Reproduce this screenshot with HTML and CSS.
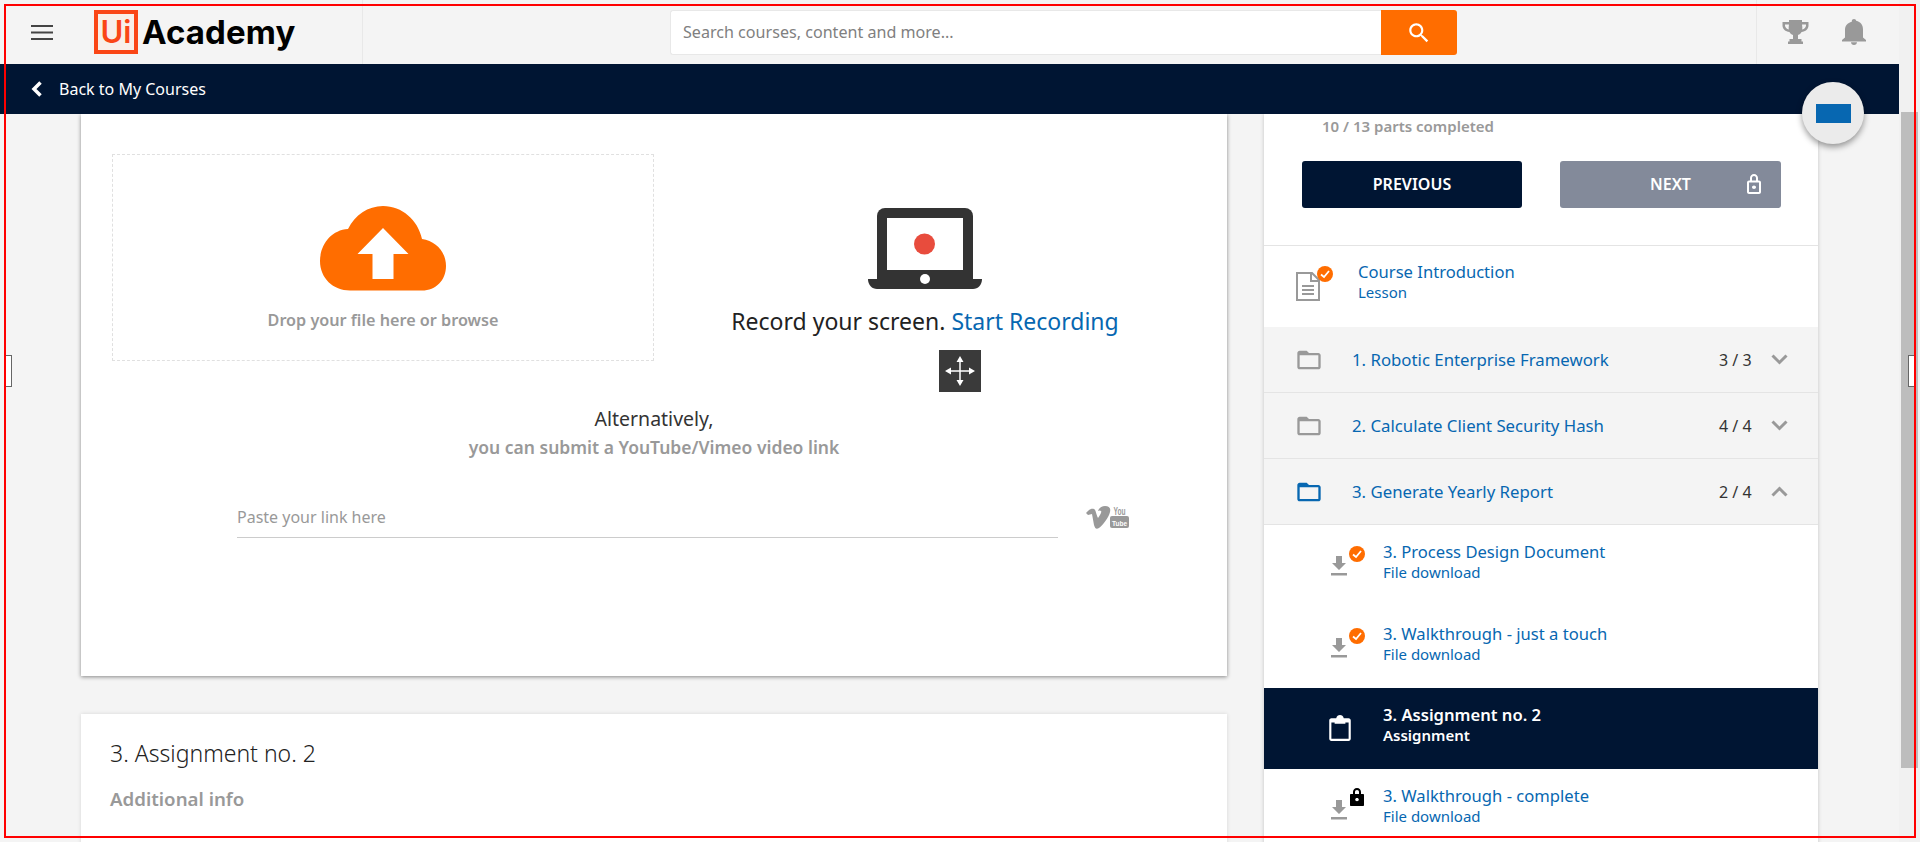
FILE: index.html
```html
<!DOCTYPE html>
<html lang="en">
<head>
  <meta charset="UTF-8">
  <meta name="viewport" content="width=device-width, initial-scale=1.0">
  <title>UiPath Academy</title>
  <link rel="stylesheet" href="styles.css">
</head>
<body>
  <div id="page">
    <div id="app">
      <div id="header">
        <div class="header-left">
          <svg class="burger" width="22" height="15" viewBox="0 0 22 15"><path d="M0 0h22v2H0zM0 6.500h22v2H0zM0 13h22v2H0z" fill="#444"/></svg>
          <div class="logo"><span class="logo-box">Ui</span><span class="logo-text">Academy</span></div>
        </div>
        <div class="search">
          <div class="search-field">Search courses, content and more...</div>
          <div class="search-btn">
            <svg width="26" height="26" viewBox="0 0 24 24"><path d="M15.500 14h-.79l-.28-.27C15.410 12.590 16 11.110 16 9.500 16 5.910 13.090 3 9.500 3S3 5.910 3 9.500 5.910 16 9.500 16c1.610 0 3.090-.59 4.230-1.570l.27.28v.79l5 4.990L20.490 19l-4.990-5zm-6 0C7.010 14 5 11.990 5 9.500S7.010 5 9.500 5 14 7.010 14 9.500 11.990 14 9.500 14z" fill="#fff"/></svg>
          </div>
        </div>
        <div class="header-right">
          <svg width="27" height="24" viewBox="0 0 27 24"><path d="M7 0h13v2h6.500v3.500c0 3.500-3 6-6.900 6.600-.9 1.500-2.100 2.500-3.600 3V19h3.500v2.500H21V24H6v-2.500h1.500V19H11v-3.900c-1.500-.5-2.700-1.500-3.600-3C3.500 11.500.5 9 .5 5.500V2H7zM3 4.500v1c0 1.900 1.600 3.400 3.900 4C6.300 8 6.900 6.200 7 4.500zm21 0h-4c.1 1.700.700 3.500.1 5 2.300-.6 3.900-2.100 3.900-4z" fill="#999"/></svg>
          <svg width="24" height="26" viewBox="0 0 24 26"><path d="M12 26c1.700 0 3-1.200 3-2.800H9c0 1.600 1.300 2.800 3 2.800zm9-7.500v-8c0-4.500-2.400-7.700-6.800-8.700V1.900C14.200.8 13.200 0 12 0S9.800.8 9.800 1.900v.9C5.400 3.800 3 7 3 11v7.500L0 21v1.500h24V21z" fill="#999"/></svg>
        </div>
      </div>

      <div id="nav">
        <svg width="11" height="16" viewBox="0 0 11 16"><path d="M9.500 1.500 3 8l6.500 6.500" fill="none" stroke="#fff" stroke-width="3.500"/></svg>
        <span>Back to My Courses</span>
      </div>

      <div id="mainContent">
        <div class="left-col">
          <div class="card card-top">
            <div class="upload-row">
              <div class="dropzone">
                <svg width="126" height="85" viewBox="0 0 126 85"><path d="M30 84.500C13 84.500 0 72 0 55 0 39 11 24 28 23 35 9 48 0 63 0c19 0 35 14 39 33 14 2 24 13 24 27 0 14-10 24.500-24 24.500z" fill="#ff6d00"/><path d="M63 22 88.500 48H73.500v25h-21V48h-15z" fill="#fff"/></svg>
                <div class="drop-text">Drop your file here or browse</div>
              </div>
              <div class="record">
                <svg class="laptop" width="114" height="81" viewBox="0 0 114 81"><path d="M17 0h80a8 8 0 0 1 8 8v63H9V8a8 8 0 0 1 8-8z" fill="#333"/><path d="M0 71h114c0 6-4 10-9 10H9c-5 0-9-4-9-10z" fill="#333"/><path d="M19 10h76v52H19z" fill="#fff"/><circle cx="56.500" cy="36" r="10.500" fill="#e84c3d"/><circle cx="57" cy="71" r="5" fill="#fff"/></svg>
                <div class="record-text">Record your screen. <a>Start Recording</a></div>
                <div class="move-icon">
                  <svg width="32" height="32" viewBox="0 0 32 32"><path d="M16 3v26M3 16h26" stroke="#fff" stroke-width="1.500"/><path d="M16 1l3.500 6h-7zM16 31l-3.500-6h7zM1 16l6-3.500v7zM31 16l-6 3.500v-7z" fill="#fff"/></svg>
                </div>
              </div>
            </div>
            <div class="alt-text">Alternatively,</div>
            <div class="alt-sub">you can submit a YouTube/Vimeo video link</div>
            <div class="link-row">
              <div class="link-input">Paste your link here</div>
              <svg class="video-logos" width="48" height="24" viewBox="0 0 48 24">
                <path d="M0 8C3 4 6 3 8 4c2 1 2 5 4 9 2-3 4-6 3-7-1-1-2-.5-3 0 1-3 4-5 7-5 4 0 6 2 5 6-1 5-7 13-11 16-3 2-4 0-5-3L6 9 2 10z" fill="#999"/>
                <rect x="24" y="11" width="19" height="12" rx="2" fill="#999"/>
                <text x="27.500" y="9.500" class="yt-you" textLength="12" lengthAdjust="spacingAndGlyphs">You</text>
                <text x="26" y="20.500" class="yt-tube" textLength="15" lengthAdjust="spacingAndGlyphs">Tube</text>
              </svg>
            </div>
          </div>
          <div class="card card-bottom">
            <div class="card-title">3. Assignment no. 2</div>
            <div class="card-sub">Additional info</div>
          </div>
        </div>

        <div class="right-col">
          <div class="progress-text">10 / 13 parts completed</div>
          <div class="btn-row">
            <div class="btn btn-prev">PREVIOUS</div>
            <div class="btn btn-next">NEXT
              <svg class="btn-lock" width="14" height="20" viewBox="0 0 14 20"><path d="M7 0C4.800 0 3 1.800 3 4v2.500H2c-1 0-2 .9-2 2V18c0 1.100 1 2 2 2h10c1 0 2-.9 2-2V8.500c0-1.100-1-2-2-2h-1V4c0-2.200-1.800-4-4-4zM5 4c0-1.100.9-2 2-2s2 .9 2 2v2.500H5zM2 8.500h10V18H2zm5 3c-1.100 0-2 .8-2 1.800s.9 1.700 2 1.700 2-.7 2-1.700-.9-1.800-2-1.800z" fill="#fff"/></svg>
            </div>
          </div>

          <div class="lesson lesson-intro">
            <div class="lesson-icon">
              <svg width="24" height="29" viewBox="0 0 24 29"><path d="M1 1h15l7 7v20H1z" fill="none" stroke="#999" stroke-width="2"/><path d="M15 1v8h8M6 14h12M6 18h12M6 22h12" fill="none" stroke="#999" stroke-width="2"/></svg>
              <span class="badge"><svg width="16" height="16" viewBox="0 0 16 16"><path d="M4 8.500 7 11l5-6" fill="none" stroke="#fff" stroke-width="1.800"/></svg></span>
            </div>
            <div class="lesson-text"><div class="lesson-name">Course Introduction</div><div class="lesson-type">Lesson</div></div>
          </div>

          <div class="group">
            <svg class="folder" width="28" height="28" viewBox="0 0 24 24"><path d="M20 6h-8l-2-2H4c-1.100 0-2 .9-2 2v12c0 1.100.9 2 2 2h16c1.100 0 2-.9 2-2V8c0-1.100-.9-2-2-2zm0 12H4V8h16z" fill="#999"/></svg>
            <div class="group-name">1. Robotic Enterprise Framework</div>
            <div class="group-count">3 / 3</div>
            <svg class="chevron" width="17" height="11" viewBox="0 0 17 11"><path d="M1.500 1.500l7 7 7-7" fill="none" stroke="#999" stroke-width="3"/></svg>
          </div>
          <div class="group">
            <svg class="folder" width="28" height="28" viewBox="0 0 24 24"><path d="M20 6h-8l-2-2H4c-1.100 0-2 .9-2 2v12c0 1.100.9 2 2 2h16c1.100 0 2-.9 2-2V8c0-1.100-.9-2-2-2zm0 12H4V8h16z" fill="#999"/></svg>
            <div class="group-name">2. Calculate Client Security Hash</div>
            <div class="group-count">4 / 4</div>
            <svg class="chevron" width="17" height="11" viewBox="0 0 17 11"><path d="M1.500 1.500l7 7 7-7" fill="none" stroke="#999" stroke-width="3"/></svg>
          </div>
          <div class="group">
            <svg class="folder" width="28" height="28" viewBox="0 0 24 24"><path d="M20 6h-8l-2-2H4c-1.100 0-2 .9-2 2v12c0 1.100.9 2 2 2h16c1.100 0 2-.9 2-2V8c0-1.100-.9-2-2-2zm0 12H4V8h16z" fill="#0767b1"/></svg>
            <div class="group-name">3. Generate Yearly Report</div>
            <div class="group-count">2 / 4</div>
            <svg class="chevron" width="17" height="11" viewBox="0 0 17 11"><path d="M1.500 9.500l7-7 7 7" fill="none" stroke="#999" stroke-width="3"/></svg>
          </div>

          <div class="lesson sub">
            <div class="lesson-icon">
              <svg width="24" height="24" viewBox="0 0 24 24"><path d="M9 3h6v7h4l-7 7-7-7h4zM4 20h16v2.500H4z" fill="#999"/></svg>
              <span class="badge"><svg width="16" height="16" viewBox="0 0 16 16"><path d="M4 8.500 7 11l5-6" fill="none" stroke="#fff" stroke-width="1.800"/></svg></span>
            </div>
            <div class="lesson-text"><div class="lesson-name">3. Process Design Document</div><div class="lesson-type">File download</div></div>
          </div>
          <div class="lesson sub">
            <div class="lesson-icon">
              <svg width="24" height="24" viewBox="0 0 24 24"><path d="M9 3h6v7h4l-7 7-7-7h4zM4 20h16v2.500H4z" fill="#999"/></svg>
              <span class="badge"><svg width="16" height="16" viewBox="0 0 16 16"><path d="M4 8.500 7 11l5-6" fill="none" stroke="#fff" stroke-width="1.800"/></svg></span>
            </div>
            <div class="lesson-text"><div class="lesson-name">3. Walkthrough - just a touch</div><div class="lesson-type">File download</div></div>
          </div>
          <div class="lesson sub active">
            <div class="lesson-icon">
              <svg width="26" height="28" viewBox="0 0 24 26"><path d="M4 4h4.500C9 2 10.300 1 12 1s3 1 3.500 3H20c1.100 0 2 .9 2 2v17c0 1.100-.9 2-2 2H4c-1.100 0-2-.9-2-2V6c0-1.100.9-2 2-2zm0 4v15h16V8h-3v1H7V8z" fill="#fff"/></svg>
            </div>
            <div class="lesson-text"><div class="lesson-name">3. Assignment no. 2</div><div class="lesson-type">Assignment</div></div>
          </div>
          <div class="lesson sub">
            <div class="lesson-icon">
              <svg width="24" height="24" viewBox="0 0 24 24"><path d="M9 3h6v7h4l-7 7-7-7h4zM4 20h16v2.500H4z" fill="#999"/></svg>
              <svg class="lock-mark" width="14" height="18" viewBox="0 0 14 18"><path d="M7 0C4.500 0 3 1.800 3 4v2H1c-.6 0-1 .4-1 1v10c0 .6.4 1 1 1h12c.6 0 1-.4 1-1V7c0-.6-.4-1-1-1h-2V4c0-2.200-1.500-4-4-4zM5 4c0-1.200.8-2 2-2s2 .8 2 2v2H5zm2 6c1 0 1.800.7 1.800 1.600S8 13.200 7 13.200s-1.800-.7-1.800-1.600S6 10 7 10z" fill="#000"/></svg>
            </div>
            <div class="lesson-text"><div class="lesson-name">3. Walkthrough - complete</div><div class="lesson-type">File download</div></div>
          </div>
        </div>
      </div>
    </div>

    <div id="scrollbar">
      <div class="scroll-top"></div>
      <div class="scroll-thumb"></div>
    </div>
  </div>

  <div id="fab"><span class="fab-rect"></span></div>
  <div id="redFrame"></div>
  <div class="handle handle-left"></div>
  <div class="handle handle-right"></div>
</body>
</html>
```

FILE: styles.css
```css
html, body {
  margin: 0;
  padding: 0;
  height: 842px;
  overflow: hidden;
  font-family: "Noto Sans", sans-serif;
  background: #f4f4f4;
}
#page {
  display: flex;
  height: 842px;
}
#app {
  width: 1899px;
  display: flex;
  flex-direction: column;
}

/* top bar */
#header {
  height: 64px;
  flex: none;
  display: flex;
  background: #f4f4f4;
}
.header-left {
  width: 363px;
  box-sizing: border-box;
  display: flex;
  align-items: center;
  border-right: 1px solid #e8e8e8;
}
.burger {
  margin-left: 31px;
}
.logo {
  display: flex;
  align-items: center;
  margin-left: 41px;
}
.logo-box {
  width: 44px;
  height: 44px;
  box-sizing: border-box;
  border: 4px solid #fa4616;
  background: #f8efe9;
  color: #fa4616;
  font-family: "Inter", sans-serif;
  font-size: 31px;
  font-weight: 600;
  line-height: 36px;
  text-align: center;
}
.logo-text {
  margin-left: 4px;
  font-family: "Inter", sans-serif;
  font-size: 33px;
  font-weight: 700;
  letter-spacing: 0.1px;
  color: #000;
}
.search {
  display: flex;
  margin: 10px 0 0 307px;
  height: 45px;
  width: 787px;
}
.search-field {
  width: 711px;
  box-sizing: border-box;
  padding-left: 12px;
  background: #fff;
  border: 1px solid #e8e8e8;
  border-right: 0;
  border-radius: 3px 0 0 3px;
  font-size: 16.100px;
  line-height: 43px;
  color: #808080;
}
.search-btn {
  width: 76px;
  background: #ff6d00;
  border-radius: 0 3px 3px 0;
  display: flex;
  align-items: center;
  justify-content: center;
}
.header-right {
  margin-left: 299px;
  width: 143px;
  box-sizing: border-box;
  border-left: 1px solid #e8e8e8;
  display: flex;
  align-items: center;
  padding-left: 25px;
  gap: 33px;
}

/* back bar */
#nav {
  height: 50px;
  flex: none;
  background: #001533;
  color: #fff;
  display: flex;
  align-items: center;
  padding-left: 31px;
  gap: 17px;
  font-size: 16px;
}

/* content */
#mainContent {
  flex: 1;
  min-height: 0;
  overflow: hidden;
  display: flex;
  padding-left: 81px;
  gap: 37px;
}
.left-col {
  width: 1146px;
  flex: none;
}
.card {
  background: #fff;
  box-sizing: border-box;
}
.card-top {
  height: 562px;
  padding: 40px 31px 0;
  box-shadow: 0 1px 4px rgba(0,0,0,0.45);
  margin-bottom: 38px;
}
.card-bottom {
  height: 200px;
  padding: 23px 29px;
  box-shadow: 0 0 4px rgba(0,0,0,0.12);
}
.upload-row {
  display: grid;
  grid-template-columns: 542px 542px;
  grid-template-rows: 207px;
}
.dropzone {
  border: 1px dashed #e0e0e0;
  display: flex;
  flex-direction: column;
  align-items: center;
  padding-top: 51px;
  box-sizing: border-box;
}
.drop-text {
  margin-top: 18px;
  font-size: 16.200px;
  font-weight: 600;
  color: #999;
}
.record {
  display: flex;
  flex-direction: column;
  align-items: center;
  padding-top: 54px;
}
.laptop {
  flex: none;
}
.record-text {
  flex: none;
  margin-top: 17px;
  font-size: 23px;
  line-height: 30px;
  color: #222;
}
.record-text a {
  color: #0767b1;
}
.move-icon {
  width: 42px;
  height: 42px;
  flex: none;
  margin: 14px 0 0 70px;
  background: #3a3a3a;
  display: flex;
  align-items: center;
  justify-content: center;
}
.alt-text {
  margin-top: 46px;
  text-align: center;
  font-size: 19.500px;
  line-height: 24px;
  color: #333;
}
.alt-sub {
  margin-top: 4px;
  text-align: center;
  font-size: 17.500px;
  font-weight: 600;
  line-height: 24px;
  color: #999;
}
.link-row {
  display: flex;
  align-items: flex-start;
  margin: 38px 0 0 125px;
}
.link-input {
  width: 821px;
  height: 40px;
  border-bottom: 1px solid #ccc;
  font-size: 16px;
  line-height: 40px;
  color: #999;
}
.video-logos {
  margin: 8px 0 0 28px;
}
.yt-you {
  font-family: "Liberation Sans", sans-serif;
  font-size: 10px;
  font-weight: bold;
  fill: #999;
}
.yt-tube {
  font-family: "Liberation Sans", sans-serif;
  font-size: 8px;
  font-weight: bold;
  fill: #fff;
}
.card-title {
  font-size: 23px;
  font-weight: 300;
  line-height: 32px;
  color: #222;
}
.card-sub {
  margin-top: 16px;
  font-size: 18.700px;
  font-weight: 600;
  line-height: 28px;
  color: #999;
}

/* right panel */
.right-col {
  width: 554px;
  flex: none;
  background: #fff;
  box-shadow: 0 0 4px rgba(0,0,0,0.2);
  align-self: flex-start;
}
.progress-text {
  margin: 2px 0 0 58px;
  font-size: 15px;
  font-weight: 600;
  line-height: 20px;
  color: #999;
}
.btn-row {
  display: flex;
  gap: 38px;
  padding: 25px 37px 37px 38px;
  border-bottom: 1px solid #e4e4e4;
}
.btn {
  height: 47px;
  border-radius: 3px;
  color: #fff;
  font-size: 16px;
  font-weight: 600;
  line-height: 47px;
  text-align: center;
  position: relative;
}
.btn-prev {
  width: 220px;
  background: #001533;
}
.btn-next {
  width: 221px;
  background: #838a9a;
}
.btn-lock {
  position: absolute;
  right: 20px;
  top: 13px;
}
.lesson {
  display: flex;
  height: 81px;
  box-sizing: border-box;
}
.lesson-intro {
  padding-left: 32px;
}
.lesson-icon {
  position: relative;
  width: 62px;
  flex: none;
}
.lesson-intro .lesson-icon > svg:first-child {
  margin-top: 26px;
}
.lesson-text {
  padding-top: 15px;
}
.lesson-name {
  font-size: 16.600px;
  line-height: 21px;
  color: #0767b1;
}
.lesson-type {
  font-size: 15px;
  line-height: 20px;
  color: #0767b1;
}
.badge {
  position: absolute;
  left: 21px;
  top: 20px;
  width: 16px;
  height: 16px;
  border-radius: 50%;
  background: #ff6d00;
}
.badge svg {
  display: block;
}
.group {
  height: 66px;
  box-sizing: border-box;
  background: #f4f4f4;
  border-bottom: 1px solid #e4e4e4;
  display: flex;
  align-items: center;
  padding-left: 31px;
}
.group-name {
  margin-left: 29px;
  width: 367px;
  font-size: 16.800px;
  color: #0767b1;
}
.group-count {
  width: 52px;
  font-size: 16px;
  color: #333;
}
.sub {
  padding-left: 63px;
}
.group + .sub {
  height: 82px;
}
.sub .lesson-icon {
  width: 56px;
}
.sub .lesson-text {
  padding-top: 16px;
}
.sub .lesson-icon > svg:first-child {
  margin-top: 28px;
}
.sub .badge {
  left: 22px;
  top: 21px;
}
.lock-mark {
  position: absolute;
  left: 23px;
  top: 19px;
}
.active {
  background: #001533;
}
.active .lesson-name,
.active .lesson-type {
  color: #fff;
  font-weight: 600;
}
.sub.active .lesson-icon > svg:first-child {
  margin-top: 26px;
}

/* scrollbar */
#scrollbar {
  width: 21px;
  flex: none;
  background: #f1f1f1;
  padding-left: 2px;
  box-sizing: border-box;
}
.scroll-top {
  height: 112px;
}
.scroll-thumb {
  height: 656px;
  margin-right: 2px;
  background: #bdbdbd;
}

/* overlays */
#fab {
  position: fixed;
  left: 1802px;
  top: 82px;
  width: 62px;
  height: 62px;
  border-radius: 50%;
  background: #ebebeb;
  box-shadow: 0 3px 6px rgba(0,0,0,0.4);
  display: flex;
  align-items: center;
  justify-content: center;
}
.fab-rect {
  width: 35px;
  height: 19px;
  background: #0767b1;
}
#redFrame {
  position: fixed;
  left: 4px;
  top: 4px;
  width: 1912px;
  height: 834px;
  box-sizing: border-box;
  border: 2px solid #f00;
}
.handle {
  position: fixed;
  top: 355px;
  width: 6px;
  height: 32px;
  box-sizing: border-box;
  background: #fff;
  border: 1px solid #666;
}
.handle-left {
  left: 6px;
  border-left: 0;
}
.handle-right {
  left: 1908px;
  border-right: 0;
}
```
